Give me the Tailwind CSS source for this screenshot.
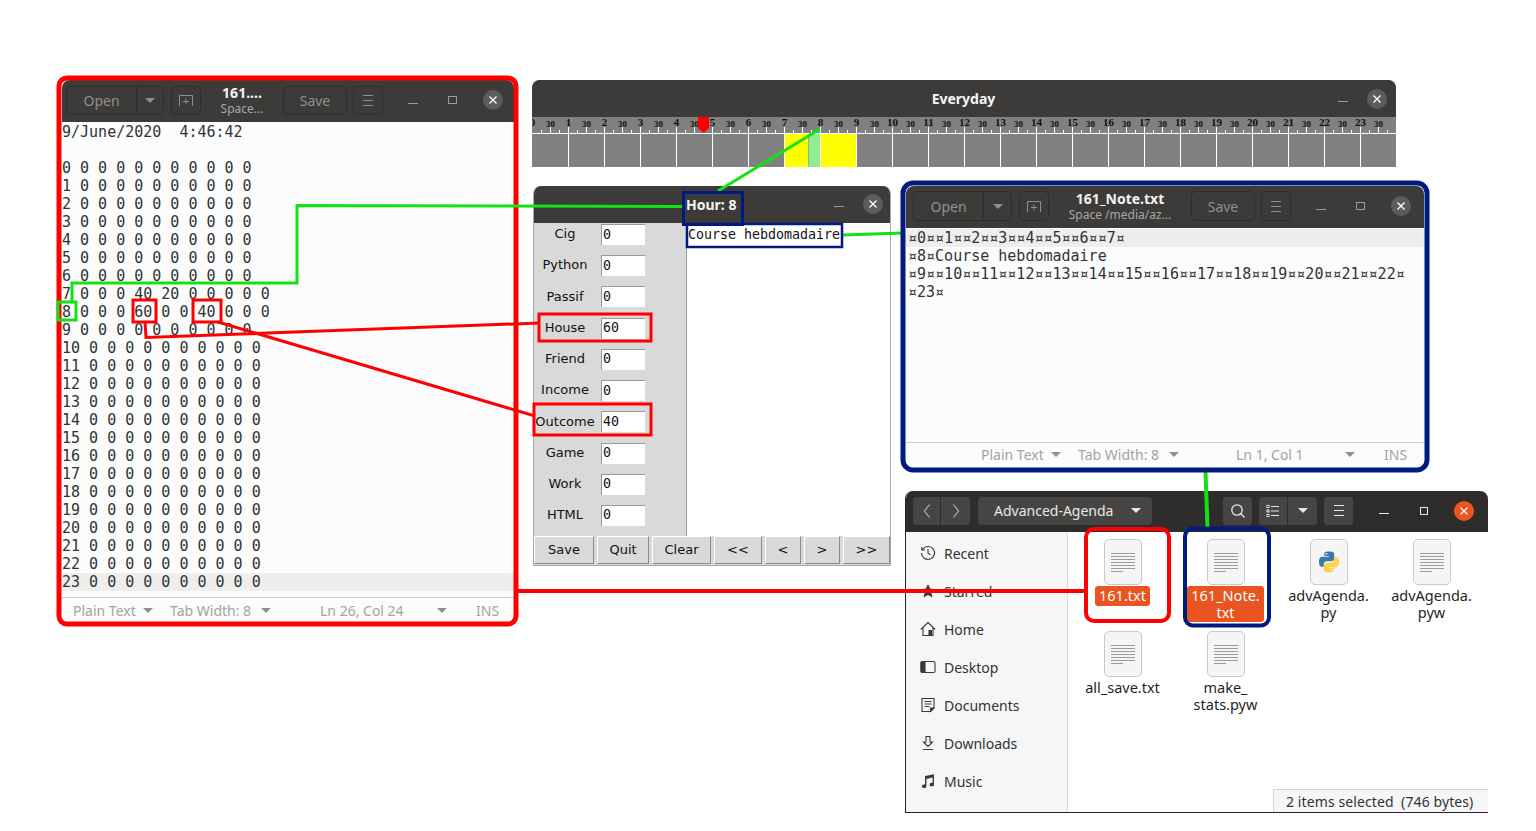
<!DOCTYPE html>
<html lang="en">

<head>
  <meta charset="UTF-8">
  <title>Advanced Agenda</title>
  <script src="https://cdn.jsdelivr.net/npm/@tailwindcss/browser@4"></script>
</head>

<body class="relative w-[1536px] h-[831px] overflow-hidden bg-white font-['Noto_Sans',sans-serif] text-[14px]">

  <!-- gedit: 161.txt -->
  <div class="absolute left-[62px] top-[80px] w-[452px] h-[542px] flex flex-col rounded-t-lg rounded-b-md overflow-hidden bg-[#fcfcfc]">
    <div class="h-[42px] shrink-0 bg-[#3d3b39] flex items-center pl-[4px] pb-[2px] text-[#918f8d]">
      <div class="w-[98px] h-[29px] flex rounded-[5px] border border-[#2f2d2c]">
        <div class="w-[70px] flex items-center justify-center border-r border-[#2f2d2c]">Open</div>
        <div class="flex-1 flex items-center justify-center"><div class="w-0 h-0 border-x-[5px] border-x-transparent border-t-[5px] border-t-[#918f8d]"></div></div>
      </div>
      <div class="ml-[7px] w-[30px] h-[29px] flex items-center justify-center rounded-[5px] border border-[#2f2d2c]">
        <svg width="16" height="16" viewBox="0 0 16 16" fill="none" stroke="#918f8d"><path d="M1.5 14V3.5h13V14M8 6.5v6M5 9.5h6"/></svg>
      </div>
      <div class="w-[82px] mt-[2px] text-center leading-[16px]">
        <div class="font-bold text-[#f2f2f2]">161....</div>
        <div class="text-[12px] text-[#a8a6a4]">Space...</div>
      </div>
      <div class="w-[64px] h-[29px] flex items-center justify-center rounded-[5px] border border-[#2f2d2c]">Save</div>
      <div class="ml-[6px] w-[30px] h-[29px] flex flex-col gap-[4px] items-center justify-center rounded-[5px] border border-[#2f2d2c]">
        <div class="w-[10px] h-px bg-[#918f8d]"></div><div class="w-[10px] h-px bg-[#918f8d]"></div><div class="w-[10px] h-px bg-[#918f8d]"></div>
      </div>
      <div class="ml-[25px] w-[10px] h-px mt-[6px] bg-[#9c9a98]"></div>
      <div class="ml-[30px] w-[9px] h-[8px] border border-[#9c9a98]"></div>
      <div class="ml-[26px] w-[20px] h-[20px] rounded-full bg-[#5e5c5a] flex items-center justify-center">
        <svg width="10" height="10" viewBox="0 0 10 10" stroke="#fff" stroke-width="1.3"><path d="M1.5 1.5l7 7M8.5 1.5l-7 7"/></svg>
      </div>
    </div>
    <div class="flex-1 pt-px font-['DejaVu_Sans_Mono',monospace] text-[15px] leading-[18px] text-[#2e3436] *:whitespace-pre">
      <div>9/June/2020  4:46:42</div>
      <div>&nbsp;</div>
      <div>0 0 0 0 0 0 0 0 0 0 0</div>
      <div>1 0 0 0 0 0 0 0 0 0 0</div>
      <div>2 0 0 0 0 0 0 0 0 0 0</div>
      <div>3 0 0 0 0 0 0 0 0 0 0</div>
      <div>4 0 0 0 0 0 0 0 0 0 0</div>
      <div>5 0 0 0 0 0 0 0 0 0 0</div>
      <div>6 0 0 0 0 0 0 0 0 0 0</div>
      <div>7 0 0 0 40 20 0 0 0 0 0</div>
      <div>8 0 0 0 60 0 0 40 0 0 0</div>
      <div>9 0 0 0 0 0 0 0 0 0 0</div>
      <div>10 0 0 0 0 0 0 0 0 0 0</div>
      <div>11 0 0 0 0 0 0 0 0 0 0</div>
      <div>12 0 0 0 0 0 0 0 0 0 0</div>
      <div>13 0 0 0 0 0 0 0 0 0 0</div>
      <div>14 0 0 0 0 0 0 0 0 0 0</div>
      <div>15 0 0 0 0 0 0 0 0 0 0</div>
      <div>16 0 0 0 0 0 0 0 0 0 0</div>
      <div>17 0 0 0 0 0 0 0 0 0 0</div>
      <div>18 0 0 0 0 0 0 0 0 0 0</div>
      <div>19 0 0 0 0 0 0 0 0 0 0</div>
      <div>20 0 0 0 0 0 0 0 0 0 0</div>
      <div>21 0 0 0 0 0 0 0 0 0 0</div>
      <div>22 0 0 0 0 0 0 0 0 0 0</div>
      <div class="bg-[#eeeeec]">23 0 0 0 0 0 0 0 0 0 0</div>
    </div>
    <div class="h-[25px] shrink-0 border-t border-[#cfcfcd] flex items-center text-[#a3a3a1] pl-[11px]">
      <span class="w-[64px] whitespace-nowrap">Plain Text</span>
      <div class="ml-[6px] w-0 h-0 border-x-[5px] border-x-transparent border-t-[5px] border-t-[#8f8f8d]"></div>
      <span class="ml-[17px] w-[85px] whitespace-nowrap">Tab Width: 8</span>
      <div class="ml-[6px] w-0 h-0 border-x-[5px] border-x-transparent border-t-[5px] border-t-[#8f8f8d]"></div>
      <span class="ml-[49px] w-[84px] whitespace-nowrap">Ln 26, Col 24</span>
      <div class="ml-[33px] w-0 h-0 border-x-[5px] border-x-transparent border-t-[5px] border-t-[#8f8f8d]"></div>
      <span class="ml-[29px]">INS</span>
    </div>
  </div>

  <!-- Everyday ruler -->
  <div class="absolute left-[532px] top-[80px] w-[864px] h-[87px] flex flex-col rounded-t-lg overflow-hidden bg-[#808080]">
    <div class="h-[37px] shrink-0 bg-[#3d3b39] flex items-center relative">
      <div class="flex-1 text-center font-bold text-[#f6f6f6] pr-[1px]">Everyday</div>
      <div class="absolute left-[806px] top-[21px] w-[10px] h-px bg-[#9c9a98]"></div>
      <div class="absolute left-[835px] top-[9px] w-[20px] h-[20px] rounded-full bg-[#5e5c5a] flex items-center justify-center">
        <svg width="10" height="10" viewBox="0 0 10 10" stroke="#fff" stroke-width="1.3"><path d="M1.5 1.5l7 7M8.5 1.5l-7 7"/></svg>
      </div>
    </div>
    <svg id="ruler" width="864" height="50" class="block"></svg>
  </div>

  <!-- Hour dialog -->
  <div class="absolute left-[533px] top-[186px] w-[358px] h-[380px] flex flex-col rounded-t-lg overflow-hidden bg-[#d9d9d9] border-x border-b border-[#a8a8a8] font-['DejaVu_Sans',sans-serif] text-[13px] text-[#111]">
    <div class="h-[37px] shrink-0 bg-[#3d3b39] flex items-center relative font-['Noto_Sans',sans-serif]">
      <div class="ml-[152px] font-bold text-[#f6f6f6] text-[14px]">Hour: 8</div>
      <div class="absolute left-[300px] top-[20px] w-[10px] h-px bg-[#9c9a98]"></div>
      <div class="absolute left-[329px] top-[8px] w-[20px] h-[20px] rounded-full bg-[#5e5c5a] flex items-center justify-center">
        <svg width="10" height="10" viewBox="0 0 10 10" stroke="#fff" stroke-width="1.3"><path d="M1.5 1.5l7 7M8.5 1.5l-7 7"/></svg>
      </div>
    </div>
    <div class="flex-1 flex min-h-0">
      <div class="w-[153px] shrink-0 border-r border-[#9a9a9a]">
        <div class="mt-px h-[302px] flex flex-col justify-between *:flex *:items-center *:h-[21px] **:[input]:ml-[5px] **:[input]:w-[44px] **:[input]:h-[21px] **:[input]:pl-[1px] **:[input]:pb-[2px] **:[input]:bg-white **:[input]:border-t **:[input]:border-l **:[input]:border-[#9a9a9a] **:[input]:font-['DejaVu_Sans_Mono',monospace] **:[input]:text-[13.3px] **:[span]:w-[62px] **:[span]:text-center **:[span]:pb-[1px]">
          <div><span>Cig</span><input value="0"></div>
          <div><span>Python</span><input value="0"></div>
          <div><span>Passif</span><input value="0"></div>
          <div><span>House</span><input value="60"></div>
          <div><span>Friend</span><input value="0"></div>
          <div><span>Income</span><input value="0"></div>
          <div><span>Outcome</span><input value="40"></div>
          <div><span>Game</span><input value="0"></div>
          <div><span>Work</span><input value="0"></div>
          <div><span>HTML</span><input value="0"></div>
        </div>
      </div>
      <div class="flex-1 bg-white font-['DejaVu_Sans_Mono',monospace] text-[13.3px] leading-[24px] pl-[1px] whitespace-pre">Course hebdomadaire</div>
    </div>
    <div class="h-[29px] shrink-0 flex gap-[3px] pb-[1px] text-[13px]">
      <div class="w-[60px] flex items-center justify-center border border-t-white border-l-white border-r-[#8a8a8a] border-b-[#8a8a8a]">Save</div>
      <div class="w-[52px] flex items-center justify-center border border-t-white border-l-white border-r-[#8a8a8a] border-b-[#8a8a8a]">Quit</div>
      <div class="w-[59px] flex items-center justify-center border border-t-white border-l-white border-r-[#8a8a8a] border-b-[#8a8a8a]">Clear</div>
      <div class="w-[48px] flex items-center justify-center border border-t-white border-l-white border-r-[#8a8a8a] border-b-[#8a8a8a]">&lt;&lt;</div>
      <div class="w-[36px] flex items-center justify-center border border-t-white border-l-white border-r-[#8a8a8a] border-b-[#8a8a8a]">&lt;</div>
      <div class="w-[36px] flex items-center justify-center border border-t-white border-l-white border-r-[#8a8a8a] border-b-[#8a8a8a]">&gt;</div>
      <div class="w-[47px] flex items-center justify-center border border-t-white border-l-white border-r-[#8a8a8a] border-b-[#8a8a8a]">&gt;&gt;</div>
    </div>
  </div>

  <!-- gedit: 161_Note.txt -->
  <div class="absolute left-[906px] top-[186px] w-[518px] h-[282px] flex flex-col rounded-t-lg rounded-b-md overflow-hidden bg-[#fcfcfc]">
    <div class="h-[42px] shrink-0 bg-[#3d3b39] flex items-center pl-[7px] pb-[2px] text-[#918f8d]">
      <div class="w-[99px] h-[30px] flex rounded-[5px] border border-[#2f2d2c]">
        <div class="w-[70px] flex items-center justify-center border-r border-[#2f2d2c]">Open</div>
        <div class="flex-1 flex items-center justify-center"><div class="w-0 h-0 border-x-[5px] border-x-transparent border-t-[5px] border-t-[#918f8d]"></div></div>
      </div>
      <div class="ml-[7px] w-[30px] h-[30px] flex items-center justify-center rounded-[5px] border border-[#2f2d2c]">
        <svg width="16" height="16" viewBox="0 0 16 16" fill="none" stroke="#918f8d"><path d="M1.5 14V3.5h13V14M8 6.5v6M5 9.5h6"/></svg>
      </div>
      <div class="w-[142px] mt-[2px] text-center leading-[16px] whitespace-nowrap">
        <div class="font-bold text-[#f2f2f2]">161_Note.txt</div>
        <div class="text-[12px] text-[#a8a6a4]">Space /media/az...</div>
      </div>
      <div class="w-[64px] h-[30px] flex items-center justify-center rounded-[5px] border border-[#2f2d2c]">Save</div>
      <div class="ml-[6px] w-[30px] h-[30px] flex flex-col gap-[4px] items-center justify-center rounded-[5px] border border-[#2f2d2c]">
        <div class="w-[10px] h-px bg-[#918f8d]"></div><div class="w-[10px] h-px bg-[#918f8d]"></div><div class="w-[10px] h-px bg-[#918f8d]"></div>
      </div>
      <div class="ml-[25px] w-[10px] h-px mt-[6px] bg-[#9c9a98]"></div>
      <div class="ml-[30px] w-[9px] h-[8px] border border-[#9c9a98]"></div>
      <div class="ml-[26px] w-[20px] h-[20px] rounded-full bg-[#5e5c5a] flex items-center justify-center">
        <svg width="10" height="10" viewBox="0 0 10 10" stroke="#fff" stroke-width="1.3"><path d="M1.5 1.5l7 7M8.5 1.5l-7 7"/></svg>
      </div>
    </div>
    <div class="flex-1 pt-px font-['DejaVu_Sans_Mono',monospace] text-[15px] leading-[18px] text-[#2e3436] *:whitespace-pre *:pl-[2px]">
      <div class="bg-[#eeeeec]">¤0¤¤1¤¤2¤¤3¤¤4¤¤5¤¤6¤¤7¤</div>
      <div>¤8¤Course hebdomadaire</div>
      <div>¤9¤¤10¤¤11¤¤12¤¤13¤¤14¤¤15¤¤16¤¤17¤¤18¤¤19¤¤20¤¤21¤¤22¤</div>
      <div>¤23¤</div>
    </div>
    <div class="h-[26px] shrink-0 border-t border-[#cfcfcd] flex items-center pb-[2px] text-[#a3a3a1] pl-[75px]">
      <span class="w-[64px] whitespace-nowrap">Plain Text</span>
      <div class="ml-[6px] w-0 h-0 border-x-[5px] border-x-transparent border-t-[5px] border-t-[#8f8f8d]"></div>
      <span class="ml-[17px] w-[85px] whitespace-nowrap">Tab Width: 8</span>
      <div class="ml-[6px] w-0 h-0 border-x-[5px] border-x-transparent border-t-[5px] border-t-[#8f8f8d]"></div>
      <span class="ml-[57px] w-[72px] whitespace-nowrap">Ln 1, Col 1</span>
      <div class="ml-[37px] w-0 h-0 border-x-[5px] border-x-transparent border-t-[5px] border-t-[#8f8f8d]"></div>
      <span class="ml-[29px]">INS</span>
    </div>
  </div>

  <!-- Files -->
  <div class="absolute left-[905px] top-[491px] w-[583px] h-[322px] flex flex-col rounded-t-lg overflow-hidden border-l border-b border-[#2a2030] bg-white">
    <div class="h-[41px] shrink-0 bg-[#2f2d2b] flex items-center pb-[2px] text-[#e8e8e6]">
      <div class="ml-[7px] w-[57px] h-[28px] flex rounded-[4px] bg-[#474543]">
        <div class="w-[28px] flex items-center justify-center border-r border-[#2f2d2b]"><svg width="10" height="16" viewBox="0 0 10 16" fill="none" stroke="#b5b3b1" stroke-width="1.2"><path d="M7.5 1.5L2.5 8l5 6.5"/></svg></div>
        <div class="flex-1 flex items-center justify-center"><svg width="10" height="16" viewBox="0 0 10 16" fill="none" stroke="#b5b3b1" stroke-width="1.2"><path d="M2.5 1.5L7.5 8l-5 6.5"/></svg></div>
      </div>
      <div class="ml-[8px] w-[174px] h-[28px] flex items-center rounded-[4px] bg-[#474543] pl-[16px]">
        <span class="w-[137px] whitespace-nowrap">Advanced-Agenda</span>
        <div class="w-0 h-0 border-x-[5px] border-x-transparent border-t-[5px] border-t-[#e8e8e6]"></div>
      </div>
      <div class="ml-[71px] w-[29px] h-[28px] flex items-center justify-center rounded-[4px] bg-[#474543]"><svg width="16" height="16" viewBox="0 0 16 16" fill="none" stroke="#e8e8e6" stroke-width="1.3"><circle cx="7" cy="7" r="5.2"/><path d="M10.800 10.800L14.500 14.500"/></svg></div>
      <div class="ml-[7px] w-[58px] h-[28px] flex rounded-[4px] bg-[#474543]">
        <div class="w-[29px] flex items-center justify-center border-r border-[#2f2d2b]"><svg width="14" height="14" viewBox="0 0 14 14" fill="none" stroke="#e8e8e6"><path d="M5 2.500h8M5 7h8M5 11.500h8"/><rect x="1" y="1.500" width="2" height="2"/><rect x="1" y="6" width="2" height="2"/><rect x="1" y="10.500" width="2" height="2"/></svg></div>
        <div class="flex-1 flex items-center justify-center"><div class="w-0 h-0 border-x-[5px] border-x-transparent border-t-[5px] border-t-[#e8e8e6]"></div></div>
      </div>
      <div class="ml-[7px] w-[29px] h-[28px] flex flex-col gap-[4px] items-center justify-center rounded-[4px] bg-[#474543]">
        <div class="w-[10px] h-px bg-[#e8e8e6]"></div><div class="w-[10px] h-px bg-[#e8e8e6]"></div><div class="w-[10px] h-px bg-[#e8e8e6]"></div>
      </div>
      <div class="ml-[26px] w-[10px] h-[1.5px] mt-[6px] bg-[#e8e8e6]"></div>
      <div class="ml-[31px] w-[8px] h-[8px] border border-[#e8e8e6]"></div>
      <div class="ml-[26px] w-[20px] h-[20px] rounded-full bg-[#e95420] flex items-center justify-center">
        <svg width="10" height="10" viewBox="0 0 10 10" stroke="#fff" stroke-width="1.3"><path d="M1.500 1.500l7 7M8.500 1.500l-7 7"/></svg>
      </div>
    </div>
    <div class="flex-1 flex min-h-0 relative">
      <div class="w-[162px] shrink-0 bg-[#f6f6f6] border-r border-[#dcdcda] pt-[2px] text-[#2e3436] *:h-[38px] *:flex *:items-center *:pl-[14px] *:gap-[8px]">
        <div>
          <svg width="16" height="16" viewBox="0 0 16 16" fill="none" stroke="#3a3a3a" stroke-width="1.1"><path d="M2.500 4.500A6.500 6.500 0 1 1 1.500 8M1.800 2v3h3M8 4v4.200l2.600 1.600"/></svg>
          <span>Recent</span>
        </div>
        <div>
          <svg width="16" height="16" viewBox="0 0 16 16" fill="#3a3a3a"><path d="M8 1l2.100 4.600 5 .6-3.700 3.400 1 5L8 12.100l-4.400 2.500 1-5L.9 6.200l5-.6z"/></svg>
          <span>Starred</span>
        </div>
        <div>
          <svg width="16" height="16" viewBox="0 0 16 16" fill="none" stroke="#3a3a3a" stroke-width="1.1"><path d="M.8 8.500L8 1.500l7.200 7M3 7v7.500h10V7"/><path d="M9 9.500h2.500v5H9z" fill="#3a3a3a"/></svg>
          <span>Home</span>
        </div>
        <div>
          <svg width="16" height="16" viewBox="0 0 16 16" fill="none" stroke="#3a3a3a" stroke-width="1.1"><rect x="1" y="2.500" width="14" height="11" rx="1.500"/><path d="M1 4a1.500 1.500 0 0 1 1.500-1.500H5v11H2.500A1.500 1.500 0 0 1 1 12z" fill="#3a3a3a"/></svg>
          <span>Desktop</span>
        </div>
        <div>
          <svg width="16" height="16" viewBox="0 0 16 16" fill="none" stroke="#3a3a3a" stroke-width="1.1"><path d="M2 1.500h12v9.500l-3.500 3.500H2zM4.500 4.500h7M4.500 7h7M4.500 9.500h5"/><path d="M14 11h-3.500v3.500z" fill="#3a3a3a"/></svg>
          <span>Documents</span>
        </div>
        <div>
          <svg width="16" height="16" viewBox="0 0 16 16" fill="none" stroke="#3a3a3a" stroke-width="1.1"><path d="M6 1.500h4V7h2.500L8 11.500 3.500 7H6zM3 14.500h10"/></svg>
          <span>Downloads</span>
        </div>
        <div>
          <svg width="16" height="16" viewBox="0 0 16 16" fill="#3a3a3a"><path d="M5 3l9-1.800v10.300a2.200 1.800 0 1 1-1.400-1.600V4.600L6.400 5.900v7.300A2.200 1.800 0 1 1 5 11.600z"/></svg>
          <span>Music</span>
        </div>
      </div>
      <div class="flex-1 pl-[3px] pt-[7px] grid grid-cols-[103px_103px_103px_103px] auto-rows-[92px] text-[14.5px] text-[#1f1f1f] leading-[17px] text-center">
        <div class="flex flex-col items-center">
          <div class="w-[38px] h-[46px] shrink-0 rounded-[5px] bg-[#f5f5f5] border border-[#c9c9c9] flex flex-col gap-[2px] justify-center items-start px-[6px]">
            <i class="block w-full h-px bg-[#9a9a9a]"></i><i class="block w-full h-px bg-[#9a9a9a]"></i><i class="block w-full h-px bg-[#9a9a9a]"></i><i class="block w-full h-px bg-[#9a9a9a]"></i><i class="block w-full h-px bg-[#9a9a9a]"></i><i class="block w-full h-px bg-[#9a9a9a]"></i><i class="block w-[12px] h-px bg-[#9a9a9a]"></i>
          </div>
          <div class="mt-px w-[55px] h-[20px] py-[1px] rounded-[3px] bg-[#e95420] text-white">161.txt</div>
        </div>
        <div class="flex flex-col items-center">
          <div class="w-[38px] h-[46px] shrink-0 rounded-[5px] bg-[#f5f5f5] border border-[#c9c9c9] flex flex-col gap-[2px] justify-center items-start px-[6px]">
            <i class="block w-full h-px bg-[#9a9a9a]"></i><i class="block w-full h-px bg-[#9a9a9a]"></i><i class="block w-full h-px bg-[#9a9a9a]"></i><i class="block w-full h-px bg-[#9a9a9a]"></i><i class="block w-full h-px bg-[#9a9a9a]"></i><i class="block w-full h-px bg-[#9a9a9a]"></i><i class="block w-[12px] h-px bg-[#9a9a9a]"></i>
          </div>
          <div class="mt-px w-[77px] py-[1px] rounded-[3px] bg-[#e95420] text-white">161_Note.<br>txt</div>
        </div>
        <div class="flex flex-col items-center">
          <div class="w-[38px] h-[46px] shrink-0 rounded-[5px] bg-[#f5f5f5] border border-[#c9c9c9] flex items-center justify-center">
            <svg width="24" height="24" viewBox="0 0 24 24"><path fill="#3c78aa" d="M12 1.500c-5 0-4.700 2.200-4.700 2.200v2.300H12v.8H5.400S2 6.400 2 11.700s3 5.100 3 5.100h1.800v-2.500s-.1-3 2.900-3h4.700s2.800 0 2.800-2.700V4.200S17.600 1.500 12 1.500zM9.400 3a.9.9 0 1 1 0 1.800.9.9 0 0 1 0-1.800z"/><path fill="#ffd343" d="M12 22.500c5 0 4.700-2.200 4.700-2.200V18H12v-.8h6.600s3.400.4 3.400-4.900-3-5.100-3-5.100h-1.800v2.500s.1 3-2.900 3H9.600s-2.800 0-2.800 2.700v4.400S6.400 22.500 12 22.500zM14.600 21a.9.9 0 1 1 0-1.800.9.9 0 0 1 0 1.800z"/></svg>
          </div>
          <div class="mt-px py-[1px]">advAgenda.<br>py</div>
        </div>
        <div class="flex flex-col items-center">
          <div class="w-[38px] h-[46px] shrink-0 rounded-[5px] bg-[#f5f5f5] border border-[#c9c9c9] flex flex-col gap-[2px] justify-center items-start px-[6px]">
            <i class="block w-full h-px bg-[#9a9a9a]"></i><i class="block w-full h-px bg-[#9a9a9a]"></i><i class="block w-full h-px bg-[#9a9a9a]"></i><i class="block w-full h-px bg-[#9a9a9a]"></i><i class="block w-full h-px bg-[#9a9a9a]"></i><i class="block w-full h-px bg-[#9a9a9a]"></i><i class="block w-[12px] h-px bg-[#9a9a9a]"></i>
          </div>
          <div class="mt-px py-[1px]">advAgenda.<br>pyw</div>
        </div>
        <div class="flex flex-col items-center">
          <div class="w-[38px] h-[46px] shrink-0 rounded-[5px] bg-[#f5f5f5] border border-[#c9c9c9] flex flex-col gap-[2px] justify-center items-start px-[6px]">
            <i class="block w-full h-px bg-[#9a9a9a]"></i><i class="block w-full h-px bg-[#9a9a9a]"></i><i class="block w-full h-px bg-[#9a9a9a]"></i><i class="block w-full h-px bg-[#9a9a9a]"></i><i class="block w-full h-px bg-[#9a9a9a]"></i><i class="block w-full h-px bg-[#9a9a9a]"></i><i class="block w-[12px] h-px bg-[#9a9a9a]"></i>
          </div>
          <div class="mt-px py-[1px]">all_save.txt</div>
        </div>
        <div class="flex flex-col items-center">
          <div class="w-[38px] h-[46px] shrink-0 rounded-[5px] bg-[#f5f5f5] border border-[#c9c9c9] flex flex-col gap-[2px] justify-center items-start px-[6px]">
            <i class="block w-full h-px bg-[#9a9a9a]"></i><i class="block w-full h-px bg-[#9a9a9a]"></i><i class="block w-full h-px bg-[#9a9a9a]"></i><i class="block w-full h-px bg-[#9a9a9a]"></i><i class="block w-full h-px bg-[#9a9a9a]"></i><i class="block w-full h-px bg-[#9a9a9a]"></i><i class="block w-[12px] h-px bg-[#9a9a9a]"></i>
          </div>
          <div class="mt-px py-[1px]">make_<br>stats.pyw</div>
        </div>
      </div>
      <div class="absolute right-0 bottom-0 w-[215px] h-[23px] bg-[#f6f6f6] border-t border-l border-[#d4d4d2] flex items-center pl-[12px] text-[#2e3436] tracking-[0.1px] whitespace-nowrap">2 items selected&nbsp; (746 bytes)</div>
    </div>
  </div>

  <!-- annotations drawn over the screenshot -->
  <svg class="absolute left-0 top-0 pointer-events-none" width="1536" height="831" fill="none">
    <g stroke="#ff0000">
      <rect x="59" y="78" width="457" height="546" rx="8" stroke-width="5"/>
      <g stroke-width="3">
        <rect x="133" y="300" width="23" height="22"/>
        <rect x="193" y="300" width="28" height="22"/>
        <rect x="539" y="314" width="112" height="27"/>
        <rect x="534" y="404" width="117" height="31"/>
        <path d="M145 322l1 15.500L540 323M218 322L535 416"/>
      </g>
      <path d="M516 591H1086" stroke-width="4"/>
      <rect x="1086" y="529" width="83" height="92" rx="8" stroke-width="4"/>
    </g>
    <g stroke="#12e212">
      <g stroke-width="3">
        <rect x="58" y="302" width="18" height="18"/>
        <path d="M72 301V283H297V205.500L683 206.500M820 129L718 191M843 235L903 233"/>
      </g>
      <path d="M1205.500 471L1207.500 528" stroke-width="4"/>
    </g>
    <g stroke="#001a80">
      <rect x="683.500" y="192.500" width="59" height="32" stroke-width="3"/>
      <rect x="687" y="224" width="155" height="23" stroke-width="2.500"/>
      <rect x="903" y="183" width="524" height="287" rx="10" stroke-width="5"/>
      <rect x="1185" y="528.500" width="84" height="97" rx="8" stroke-width="4"/>
    </g>
  </svg>

  <script>
    // ruler of the Everyday window: one mark every 15 min, coloured blocks for logged hours
    const H = 36;
    let s = '';
    s += '<rect x="252" y="17" width="24" height="33" fill="#ffff00"/>';
    s += '<rect x="276.500" y="17" width="12" height="33" fill="#90ee90"/>';
    s += '<rect x="289" y="17" width="35" height="33" fill="#ffff00"/>';
    s += '<path d="M0 16.500H864" stroke="#fff"/>';
    for (let h = 0; h < 24; h++) {
      const x = h * H + 0.5;
      if (h > 0) s += `<path d="M${x} 10V50" stroke="#fff"/>`;
      s += `<path d="M${x + 9} 13V17M${x + 18} 10V17M${x + 27} 13V17" stroke="#fff"/>`;
      s += `<text x="${x}" y="8.500" text-anchor="middle" font-family="Liberation Serif" font-weight="700" font-size="11" fill="#111">${h}</text>`;
      s += `<text x="${x + 18}" y="10" text-anchor="middle" font-family="Liberation Serif" font-weight="700" font-size="9" fill="#111">30</text>`;
    }
    s += '<path d="M166 0H177V11L171.500 16L166 11Z" fill="#ff0000"/>';
    document.getElementById('ruler').innerHTML = s;
  </script>
</body>

</html>
